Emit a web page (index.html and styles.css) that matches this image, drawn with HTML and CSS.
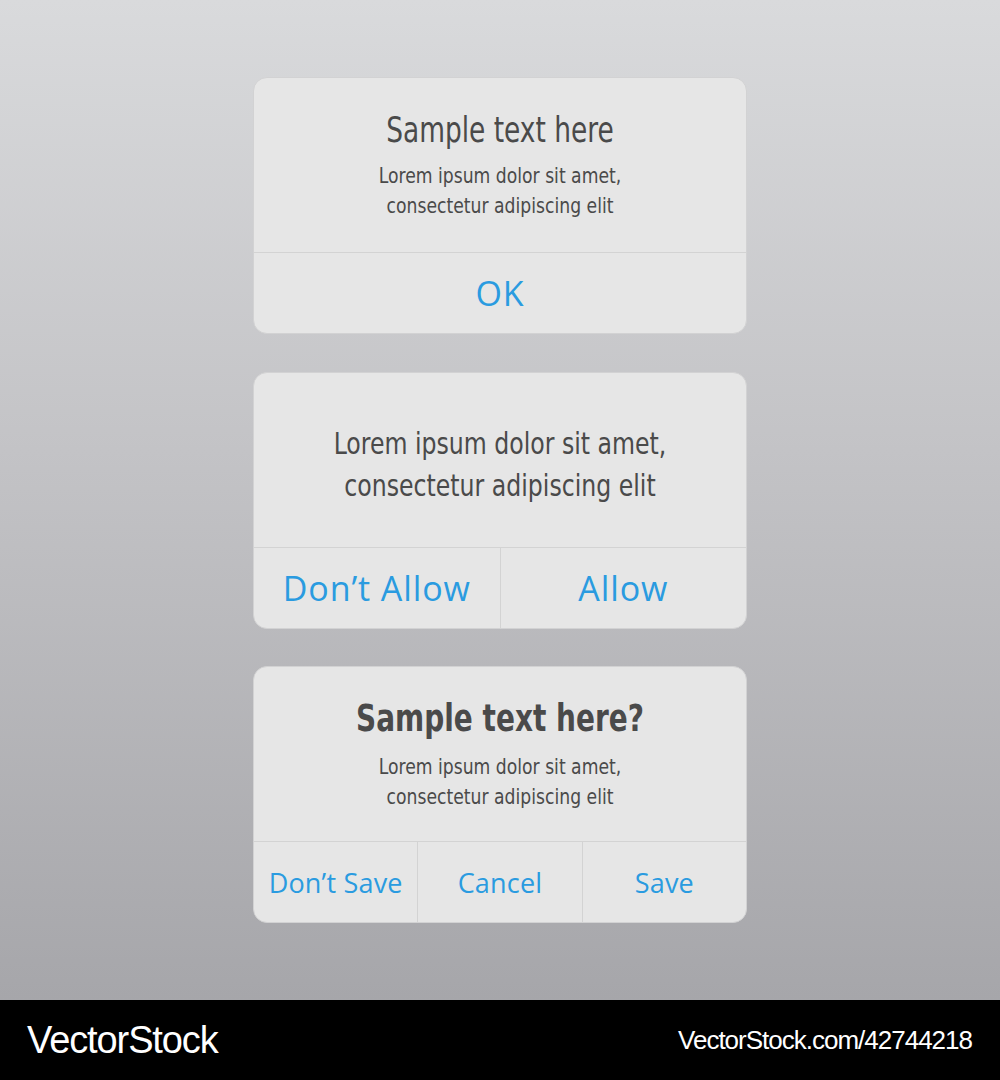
FILE: index.html
```html
<!DOCTYPE html>
<html lang="en">
<head>
  <meta charset="UTF-8">
  <meta name="viewport" content="width=device-width, initial-scale=1.0">
  <title>Alert dialogs</title>
  <link rel="stylesheet" href="styles.css">
</head>
<body>
  <main class="stage">

    <!-- Single button alert -->
    <section class="alert">
      <div class="alert-body">
        <h2 class="alert-title">Sample text here</h2>
        <p class="alert-text">Lorem ipsum dolor sit amet,<br>consectetur adipiscing elit</p>
      </div>
      <div class="alert-actions">
        <button class="btn">OK</button>
      </div>
    </section>

    <!-- Two button alert, message only -->
    <section class="alert">
      <div class="alert-body">
        <p class="alert-text alert-text-large">Lorem ipsum dolor sit amet,<br>consectetur adipiscing elit</p>
      </div>
      <div class="alert-actions">
        <button class="btn">Don’t Allow</button>
        <button class="btn">Allow</button>
      </div>
    </section>

    <!-- Three button alert -->
    <section class="alert">
      <div class="alert-body">
        <h2 class="alert-title alert-title-bold">Sample text here?</h2>
        <p class="alert-text">Lorem ipsum dolor sit amet,<br>consectetur adipiscing elit</p>
      </div>
      <div class="alert-actions">
        <button class="btn btn-small">Don’t Save</button>
        <button class="btn btn-small">Cancel</button>
        <button class="btn btn-small">Save</button>
      </div>
    </section>

  </main>

  <footer class="credit">
    <span class="credit-logo">VectorStock</span>
    <span class="credit-id">VectorStock.com/42744218</span>
  </footer>
</body>
</html>
```

FILE: styles.css
```css
* {
  margin: 0;
  padding: 0;
  box-sizing: border-box;
}

body {
  width: 1000px;
  height: 1080px;
  font-family: "DejaVu Sans Condensed", "DejaVu Sans", sans-serif;
  color: #4a4a4a;
}

/* Grey backdrop */
.stage {
  height: 1000px;
  background: linear-gradient(to bottom, #d9dadc 0%, #c3c3c6 45%, #a6a6aa 100%);
  display: flex;
  flex-direction: column;
  align-items: center;
  padding-top: 77px;
  gap: 37.5px;
}

/* Alert card */
.alert {
  width: 494px;
  height: 257px;
  background-color: #e6e6e6;
  border: 1px solid #d2d2d3;
  border-radius: 14px;
  display: flex;
  flex-direction: column;
  overflow: hidden;
}

.alert-body {
  height: 175px;
  display: flex;
  flex-direction: column;
  align-items: center;
  justify-content: center;
  text-align: center;
  border-bottom: 1px solid #d3d3d3;
}

/* the copy font is a touch wide, squeeze it to a condensed look */
.alert-title,
.alert-text {
  width: 100%;
}

.alert-title {
  font-size: 35px;
  font-weight: normal;
  line-height: 40px;
  margin-bottom: 11px;
  transform: scaleX(0.84);
}

.alert-title-bold {
  font-size: 37px;
  font-weight: bold;
  line-height: 44px;
  margin-bottom: 11px;
}

.alert-text {
  font-size: 21.5px;
  line-height: 30px;
  transform: scaleX(0.89);
}

.alert-text-large {
  font-size: 29.5px;
  line-height: 42px;
  padding-top: 10px;
}

/* Button row */
.alert-actions {
  flex: 1;
  display: flex;
}

.btn {
  flex: 1;
  border: none;
  background: transparent;
  font-family: "Open Sans", sans-serif;
  color: #2a9be0;
  font-size: 34px;
  letter-spacing: 0.9px;
  cursor: pointer;
}

.btn + .btn {
  border-left: 1px solid #d3d3d3;
}

.btn-small {
  font-size: 27px;
  letter-spacing: 0.2px;
}

/* Bottom credit bar */
.credit {
  height: 80px;
  background-color: #000;
  color: #fff;
  display: flex;
  align-items: center;
  justify-content: space-between;
  padding: 0 28px 0 27px;
  font-family: "Liberation Sans", sans-serif;
}

.credit-logo {
  font-size: 38px;
  letter-spacing: -1.1px;
}

.credit-id {
  font-size: 26px;
  letter-spacing: -1px;
}
```
